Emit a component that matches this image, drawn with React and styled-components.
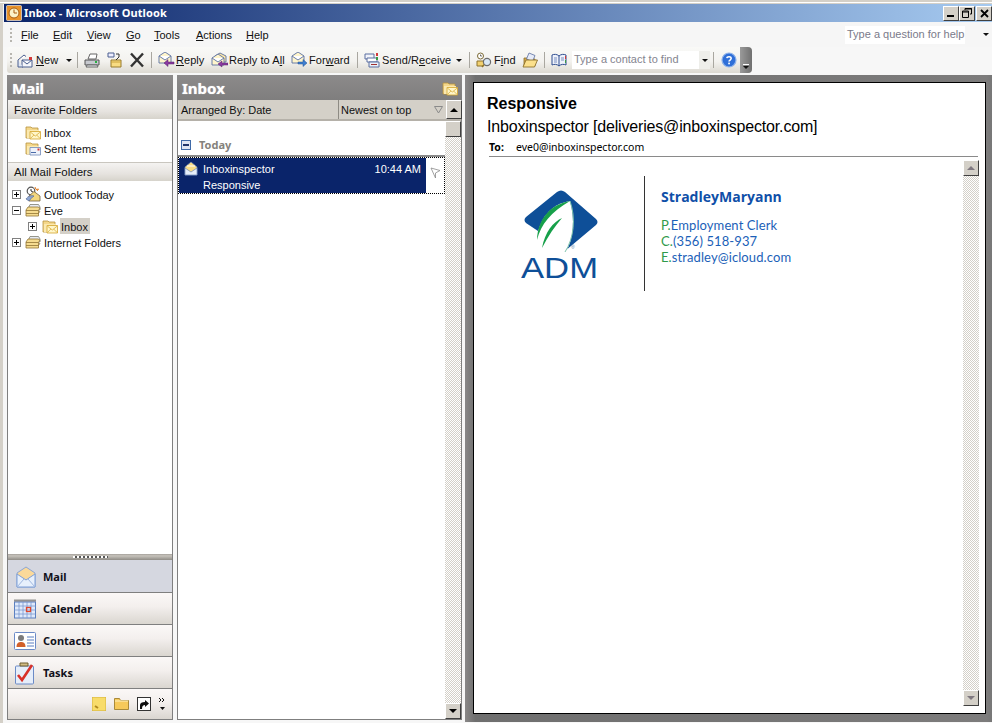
import React from "react";
import styled, { createGlobalStyle } from "styled-components";

const UI = `"Liberation Sans", Arial, sans-serif`;
const UIB = `"Noto Sans", "Liberation Sans", sans-serif`;

const Global = createGlobalStyle`
  html, body { margin: 0; padding: 0; background: #f7f7f7; overflow: hidden; }
  * { box-sizing: border-box; }
`;

const Win = styled.div`
  width: 992px; height: 719px; display: flex; flex-direction: column;
  font: 11px/14px ${UI}; color: #000; background: #f7f7f7; overflow: hidden;
  border-left: 3px solid #d4d0c8;
`;
const TopEdge = styled.div`
  height: 4px; background: linear-gradient(#d4d0c8 0 2px, #fff 2px 3px, #d4d0c8 3px);
`;
const TitleBar = styled.div`
  height: 18px; flex: none; display: flex; align-items: center; padding-left: 2px;
  margin-left: 1px; background: linear-gradient(90deg, #0a246a, #a6caf0);
`;
const TitleText = styled.div`
  color: #fff; font: 700 11px/14px ${UIB}; margin-left: 2px; flex: 1; white-space: nowrap; letter-spacing: 0.1px;
`;
const WinBtn = styled.div`
  width: 16px; height: 15px; margin-right: ${p => p.$mr || 0}px; background: #d4d0c8; flex: none;
  border: 1px solid; border-color: #fff #404040 #404040 #fff; display: flex; align-items: center; justify-content: center;
`;
const MenuBar = styled.div`
  height: 25px; flex: none; display: flex; align-items: center; background: #f6f6f6; position: relative;
  padding-top: 1px;
`;
const Grip = styled.div`
  width: 2px; height: ${p => p.$h || 14}px; flex: none; margin: 0 ${p => p.$r}px 0 ${p => p.$l}px;
  background: repeating-linear-gradient(#b8b6b0 0 2px, transparent 2px 4px);
`;
const MenuItem = styled.span`
  width: ${p => p.$w}px; flex: none; font-size: 11px; white-space: nowrap; color: #111;
  u { text-underline-offset: 1px; }
`;
const HelpBox = styled.div`
  margin-left: auto; width: 120px; height: 18px; margin-right: 27px; background: #fff; color: #7a7a8a;
  padding-left: 2px; font-size: 11px; line-height: 17px; white-space: nowrap; margin-top: -1px;
`;
const Arrow = styled.span`
  display: inline-block; width: 0; height: 0; flex: none;
  border-left: 3px solid transparent; border-right: 3px solid transparent; border-top: 3px solid #111;
`;
const AbsoluteArrow = styled(Arrow)`
  position: absolute; right: 3px; top: 11px;
`;
const ToolRow = styled.div`
  height: 28px; flex: none; display: flex; align-items: flex-start;
`;
const Toolbar = styled.div`
  margin-left: 4px; width: 745px; height: 26px; border-radius: 3px 4px 4px 3px; display: flex; align-items: center;
  background: linear-gradient(#f9f9f7, #f3f2ef 55%, #dcd9d1); position: relative; padding-right: 11px;
`;
const ToolEnd = styled.div`
  position: absolute; right: 0; top: 0; bottom: 0; width: 12px; background: linear-gradient(90deg,#9a9a9a,#707070);
  border-radius: 0 4px 4px 0; display: flex; flex-direction: column; align-items: center; justify-content: flex-end; padding-bottom: 4px;
  &::before { content: ""; width: 6px; height: 1px; background: #fff; margin-bottom: 1px; }
`;
const Tool = styled.div`
  width: ${p => p.$w}px; flex: none; display: flex; align-items: center; justify-content: ${p => p.$c ? "center" : "flex-start"};
  padding-left: ${p => p.$pl || 0}px; gap: ${p => p.$gap ?? 1}px; font-size: 11px; letter-spacing: 0.05px; white-space: nowrap; color: #111;
  u { text-underline-offset: 1px; }
`;
const Sep = styled.div`
  width: 1px; height: 16px; background: #a9a7a0; flex: none; margin: 0 ${p => p.$r ?? 3}px 0 ${p => p.$l ?? 2}px;
`;
const ContactBox = styled.div`
  width: 138px; height: 18px; flex: none; background: #fff; color: #84848f; font-size: 11px; line-height: 17px;
  padding-left: 2px; display: flex; justify-content: space-between; white-space: nowrap;
`;
const ContactDrop = styled.div`
  width: 11px; background: #eeeeea; display: flex; align-items: center; justify-content: center;
`;
const Main = styled.div`
  flex: 1; min-height: 0; display: flex; padding-left: 4px;
`;
const LeftPane = styled.div`
  width: 166px; height: 645px; flex: none; display: flex; flex-direction: column;
  border: 1px solid #7f7f7f; border-top: 0; background: #fff; margin-right: 4px;
`;
const PaneHead = styled.div`
  height: 25px; flex: none; margin: 0 -1px; background: linear-gradient(#8c8a8a, #7f7e7e); color: #fff; font: 700 15px/24px ${UIB};
  padding: 0 4px 0 5px; display: flex; justify-content: space-between; align-items: center;
  text-shadow: 0 0 1px #ddd;
`;
const SectionHead = styled.div`
  height: 19px; flex: none; background: linear-gradient(#f4f3f1, #e6e3df 60%, #d6d3cb); font-size: 11.5px; line-height: 18px; padding-left: 6px;
  padding-top: ${p => p.$top ? 0 : 1}px;
  color: #111; border-top: ${p => p.$top ? "1px solid #c9c6bf" : "0"}; white-space: nowrap;
`;
const FavList = styled.div`
  height: 43px; flex: none; padding-top: 5px;
`;
const Tree = styled.div`
  flex: 1; padding-top: 5px;
`;
const Row = styled.div`
  height: 16px; display: flex; align-items: center; padding-left: ${p => p.$pl}px; font-size: 11px; color: #111; white-space: nowrap;
`;
const RowLabel = styled.span`
  margin-left: 2px; padding: 0 2px 0 1px; height: 16px; line-height: 18px; background: ${p => p.$sel ? "#d4d0c8" : "transparent"};
`;
const PlusBox = styled.div`
  width: 9px; height: 9px; flex: none; border: 1px solid #808080; background: #fff; position: relative; margin-right: ${p => p.$mr}px;
  &::before { content: ""; position: absolute; left: 1px; right: 1px; top: 3px; height: 1px; background: #000; }
  &::after { content: ""; position: absolute; top: 1px; bottom: 1px; left: 3px; width: 1px; background: ${p => p.$minus ? "transparent" : "#000"}; }
`;
const Splitter = styled.div`
  height: 6px; flex: none; background: linear-gradient(#a4a09a, #c7c3bc 30%, #8f8c86); display: flex; justify-content: center; align-items: center;
  &::before { content: ""; width: 35px; height: 2px; background: repeating-linear-gradient(90deg, #fff 0 2px, #555 2px 4px); }
`;
const NavBtn = styled.div`
  height: 32px; flex: none; display: flex; align-items: center; padding-left: 6px; padding-top: ${p => p.$active ? 1 : 0}px;
  font: 700 11px/14px ${UIB}; color: #10101a; border-top: ${p => p.$active ? 0 : "1px solid #7f7f7f"};
  background: ${p => p.$active ? "#d5d7e0" : "linear-gradient(#fbf8f7, #f3efed 45%, #dad6d0)"};
`;
const NavSlot = styled.div`
  width: 29px; flex: none; padding-left: ${p => p.$pl || 0}px; display: flex; align-items: center;
`;
const NavFoot = styled.div`
  height: 31px; flex: none; display: flex; justify-content: flex-end; align-items: center; padding-right: 6px; gap: 8px; border-top: 1px solid #7f7f7f;
  background: linear-gradient(#fbf8f7, #f3efed 45%, #dad6d0);
`;
const MidPane = styled.div`
  width: 285px; height: 645px; flex: none; display: flex; flex-direction: column; margin-right: 3px;
  border: 1px solid #7f7f7f; border-top: 0; background: #fff;
`;
const SortBar = styled.div`
  height: 21px; flex: none; background: #d4d0c8; display: flex; border-bottom: 2px solid #b5b1a9;
  font-size: 11px; line-height: 20px; color: #111; white-space: nowrap;
`;
const SortCol = styled.div`
  width: ${p => p.$w}px; flex: none; padding-left: ${p => p.$pl}px; border-left: ${p => p.$line ? "1px solid #8e8b84" : 0}; position: relative; height: 19px;
`;
const SortFlag = styled.svg`
  position: absolute; right: 3px; top: 6px;
`;
const MidBody = styled.div`
  flex: 1; min-height: 0; display: flex;
`;
const MailList = styled.div`
  flex: 1; padding-top: 13px;
`;
const GroupRow = styled.div`
  height: 23px; display: flex; align-items: center; padding: 2px 0 2px 3px; font: 700 11px/14px ${UIB}; color: #85827c; gap: 8px;
  border-bottom: 2px solid #8a8a8a;
`;
const GroupBox = styled.div`
  width: 10px; height: 10px; border: 1px solid #3f6aa8; background: #dfe6f3; position: relative;
  &::before { content: ""; position: absolute; left: 1px; right: 1px; top: 3px; height: 2px; background: #20356a; }
`;
const MailRow = styled.div`
  height: 37px; display: flex; border: 1px dotted #000; background: #fff;
`;
const MailMain = styled.div`
  width: 247px; flex: none; background: #0a246a; color: #fff; display: grid; grid-template-columns: 20px 1fr auto; grid-template-rows: 17px 16px;
  font-size: 11px; line-height: 16px; padding: 2px 5px 0 4px; white-space: nowrap; align-items: center;
`;
const Subject = styled.div`
  grid-column: 2 / 4;
`;
const MailFlag = styled.div`
  flex: 1; display: flex; justify-content: center; padding: 9px 0 0 1px;
`;
const VScroll = styled.div`
  width: 16px; flex: none; display: flex; flex-direction: column;
  background: repeating-conic-gradient(#d4d0c8 0 25%, #fff 0 50%) 0 0 / 2px 2px;
`;
const ScrollBtn = styled.div`
  width: 16px; height: ${p => p.$h || 16}px; flex: none; background: #d4d0c8; border: 1px solid; border-color: #fff #404040 #404040 #fff; display: flex; align-items: center; justify-content: center;
`;
const ScrollSpace = styled.div`
  flex: 1;
`;
const UpTri = styled.span`
  width: 0; height: 0; border-left: 4px solid transparent; border-right: 4px solid transparent;
  border-bottom: 4px solid ${p => p.$dim ? "#7f7880" : "#000"};
`;
const DownTri = styled.span`
  width: 0; height: 0; border-left: 4px solid transparent; border-right: 4px solid transparent;
  border-top: 4px solid ${p => p.$dim ? "#7f7880" : "#000"};
`;
const ReadFrame = styled.div`
  flex: 1; height: 647px; padding: 7px 6px 8px 8px; display: flex;
  background: linear-gradient(90deg, #8a8888, #6f6f6f 2%, #7d7c7c 99%, #777);
`;
const ReadPage = styled.div`
  flex: 1; background: #fff; border: 1px solid #000; display: flex; flex-direction: column; padding-right: 6px; padding-bottom: 7px;
`;
const Head = styled.div`
  height: 73px; flex: none; padding: 11px 0 0 13px; margin-bottom: 4px;
`;
const Subj = styled.div`
  font: 700 16px/20px "Liberation Sans", Arial, sans-serif; color: #000;
`;
const From = styled.div`
  font: 16px/20px "Liberation Sans", Arial, sans-serif; color: #000; margin-top: 3px; letter-spacing: -0.17px;
`;
const ToRow = styled.div`
  display: flex; margin: 3px 1px 0 2px; height: 17px; font: 10.5px/14px ${UIB}; border-bottom: 1px solid #8a8a8a;
`;
const ToLabel = styled.b`
  width: 27px; flex: none;
`;
const Body = styled.div`
  flex: 1; min-height: 0; display: flex; justify-content: space-between;
`;
const Signature = styled.div`
  display: flex; align-items: flex-start; padding: 16px 0 0 47px;
`;
const Logo = styled.svg`
  margin-top: 14px; flex: none;
`;
const VRule = styled.div`
  width: 1px; height: 115px; background: #333; margin: 0 16px 0 45px; flex: none;
`;
const SigText = styled.div`
  padding-top: 12px;
`;
const SigName = styled.div`
  font: 700 14px/18px "Open Sans", sans-serif; color: #0f4fa8; margin-bottom: 11px; white-space: nowrap;
`;
const SigLine = styled.div`
  font: 13px/16px Lato, sans-serif; letter-spacing: 0.1px; white-space: nowrap; color: #1c5fb8;
  span { color: #2f9a4a; }
`;

const I = ({ s = 16, w, h, children, vb }) => (
  <svg width={w || s} height={h || s} viewBox={vb || "0 0 16 16"} style={{ flex: "none", display: "block" }}>{children}</svg>
);

const FolderBase = () => (
  <>
    <path d="M1 4V3h5l1 1h6v10H1z" fill="#f4d78a" stroke="#b8923c" strokeWidth=".8" />
    <path d="M2 6h12v8H2z" fill="#fbe9b0" />
  </>
);
const MailFolder = () => (
  <I>
    <FolderBase />
    <path d="M5 7.5h10.5v7.5H5z" fill="#fff6c9" stroke="#d3a52e" strokeWidth=".8" />
    <path d="M5.3 8l5 4 5-4M5.3 14.6l3.6-3.6M15.2 14.6l-3.6-3.6" fill="none" stroke="#d9ae3c" strokeWidth=".8" />
  </I>
);
const SentFolder = () => (
  <I>
    <FolderBase />
    <path d="M5 7.5h10.5v7.5H5z" fill="#eef2fa" stroke="#6f88b8" strokeWidth=".8" />
    <path d="M6 12.5h5" stroke="#4a6aa8" strokeWidth="1" />
    <rect x="12.5" y="8.5" width="2" height="2" fill="#d23a3a" />
  </I>
);
const TodayIcon = () => (
  <I>
    <circle cx="6" cy="5" r="3.8" fill="#fff" stroke="#555" strokeWidth="1.2" />
    <path d="M6 3v2l2 1" stroke="#333" fill="none" />
    <path d="M4 15v-5l5-4.5 6 4.5v5z" fill="#f3d77e" stroke="#75603a" strokeWidth=".8" />
    <path d="M10 1l1 2.5L13.5 3 12 5" stroke="#e2791c" fill="none" />
    <path d="M1 13c2-3 5-4 8-3-2 1-4 4-5 5z" fill="#8ea6d2" stroke="#4a5f8f" strokeWidth=".6" />
  </I>
);
const StackFolder = () => (
  <I>
    <path d="M3 7l2-4.500h8.500L15 5v3z" fill="#e6ebf4" stroke="#7d7d70" strokeWidth=".8" />
    <path d="M1 8l2-3h10l2 1-1.500 2.500V14H1z" fill="#f6dc90" stroke="#927535" strokeWidth=".8" />
    <path d="M1 8.500h12.500M1 11.500h12.500L15 9" fill="none" stroke="#927535" strokeWidth=".8" />
  </I>
);
const NewIcon = () => (
  <I>
    <path d="M1 8l6-5 2 1.5" fill="#fff" stroke="#4a5f8f" />
    <path d="M5 8h10v7H5z" fill="#f6f7fb" stroke="#4a5f8f" />
    <path d="M1 8v7h5" fill="#dfe6f3" stroke="#4a5f8f" />
    <path d="M5 8l5 4 5-4" fill="none" stroke="#4a5f8f" />
    <rect x="12" y="5" width="3" height="3" fill="#d23a3a" />
  </I>
);
const PrintIcon = () => (
  <I>
    <path d="M4 7l2-5h7l-1 5z" fill="#fff" stroke="#666" />
    <path d="M1 8h14v5H1z" fill="#c7c9cf" stroke="#555" />
    <path d="M3 13h10l1 2H2z" fill="#eceef2" stroke="#666" />
    <rect x="11" y="9" width="2" height="2" fill="#28b040" />
  </I>
);
const MoveIcon = () => (
  <I>
    <path d="M2 1h6v4H2z" fill="#eef" stroke="#4a5f8f" />
    <path d="M5 8h10v7H5z" fill="#f8dc82" stroke="#977a2c" />
    <path d="M10 2h3v3M13 5l-3 3" fill="none" stroke="#333" />
    <path d="M5 10h10" stroke="#c9a23d" />
  </I>
);
const DelIcon = () => (
  <I s={16}><path d="M2 1.5l12 13M14 1.5l-12 13" stroke="#333" strokeWidth="2.4" /></I>
);
const Env = ({ y = 3, fill = "#fff5cb", st = "#5a6fa0" }) => (
  <>
    <path d={`M1 ${y + 3}l6-4 6 4v7H1z`} fill={fill} stroke={st} strokeWidth=".9" />
    <path d={`M1 ${y + 3}l6 4 6-4`} fill="#fff" stroke={st} strokeWidth=".9" />
  </>
);
const ReplyIcon = () => (
  <I w={17} h={16} vb="0 0 17 16">
    <Env y={1} />
    <path d="M16 10H10V7.5L6 11l4 3.5V12h6z" fill="#8b3aa0" stroke="#57206a" strokeWidth=".5" />
  </I>
);
const ReplyAllIcon = () => (
  <I w={17} h={16} vb="0 0 17 16">
    <path d="M4 4l5-3 6 3v6H4z" fill="#fde7a8" stroke="#5a6fa0" strokeWidth=".9" />
    <Env y={3} />
    <path d="M17 11h-6V9l-4 3 4 3v-2h6z" fill="#8b3aa0" stroke="#57206a" strokeWidth=".5" />
  </I>
);
const ForwardIcon = () => (
  <I w={17} h={16} vb="0 0 17 16">
    <Env y={1} />
    <path d="M7 10h5V7.500l4 3.500-4 3.500V12H7z" fill="#3f7fd0" stroke="#1f4f90" strokeWidth=".5" />
  </I>
);
const SendIcon = () => (
  <I>
    <path d="M1 2h9v5H1z" fill="#f2f4fa" stroke="#5a6fa0" />
    <path d="M3 6h10v4H3z" fill="#fff" stroke="#5a6fa0" />
    <path d="M5 10h10v5H5z" fill="#eaf0fa" stroke="#5a6fa0" />
    <rect x="12" y="1" width="2" height="3" fill="#d23a3a" />
    <rect x="12" y="5" width="2" height="3" fill="#3b9a46" />
    <path d="M7 12.500h6" stroke="#a03030" />
  </I>
);
const FindIcon = () => (
  <I>
    <circle cx="4.500" cy="4" r="3" fill="#fff" stroke="#7b6a34" />
    <path d="M4.500 2.500V4h1.500" stroke="#333" fill="none" strokeWidth=".7" />
    <path d="M1 14V9h8v2l-2 3z" fill="#f2d170" stroke="#8d722c" />
    <circle cx="11" cy="10" r="3.600" fill="#d8e7f6" stroke="#6c6c6c" strokeWidth="1.200" />
    <path d="M8 13l-2 2" stroke="#8d722c" strokeWidth="1.600" />
  </I>
);
const OpenFolderIcon = () => (
  <I>
    <path d="M2 6h4l1 1h6v7H2z" fill="#d2a648" stroke="#8d722c" strokeWidth=".8" />
    <path d="M7 1l6 2.500-2.500 6-6-2.500z" fill="#e6ebf8" stroke="#5a6fa0" strokeWidth=".8" />
    <path d="M1 15l3-7h11.500l-3 7z" fill="#fbe08c" stroke="#8d722c" strokeWidth=".9" />
  </I>
);
const BookIcon = () => (
  <I>
    <path d="M1 3c2-1 5-1 7 1 2-2 5-2 7-1v10c-2-1-5-1-7 1-2-2-5-2-7-1z" fill="#eef2fb" stroke="#2f4d8f" />
    <path d="M8 4v10" stroke="#2f4d8f" />
    <path d="M3 6h3M3 8h3M3 10h3M10 6h3M10 8h3" stroke="#7b8fc0" />
    <path d="M14.500 4v3" stroke="#d23a3a" strokeWidth="1" /><path d="M14.500 8v3" stroke="#3b9a46" strokeWidth="1" />
  </I>
);
const HelpIcon = () => (
  <I>
    <circle cx="8" cy="8" r="7" fill="#2f6fd8" stroke="#8fb3ea" strokeWidth="1.200" />
    <path d="M5.800 6.200C6 4.400 10 4.200 10.200 6.200 10.400 8 8 8 8 9.600" fill="none" stroke="#fff" strokeWidth="1.600" />
    <rect x="7.200" y="10.600" width="1.700" height="1.700" fill="#fff" />
  </I>
);
const ClockLogo = () => (
  <I>
    <rect x=".5" y=".5" width="15" height="15" rx="1" fill="#e9932a" stroke="#fff" strokeWidth=".6" />
    <circle cx="8" cy="8" r="5" fill="#fbf2c8" stroke="#a85d10" />
    <path d="M8 4.500V8h3" fill="none" stroke="#a85d10" />
  </I>
);
const MailOpenSmall = () => (
  <I>
    <path d="M2 6l6-5 6 5v8H2z" fill="#f9dc85" stroke="#6f88b8" strokeWidth=".7" />
    <path d="M2 7l6 4 6-4v7H2z" fill="#e6eefa" stroke="#6f88b8" strokeWidth=".7" />
    <path d="M4 5h8" stroke="#fff" />
  </I>
);
const NavMail = () => (
  <I w={20} h={22} vb="0 0 20 22">
    <path d="M1 7l9-6 9 6v14H1z" fill="#fbd99a" stroke="#8aa6d6" />
    <path d="M1 8l9 6 9-6v13H1z" fill="#e7f0fc" stroke="#7f9fd6" />
    <path d="M1 21l7-8M19 21l-7-8" stroke="#9fb7e0" fill="none" />
  </I>
);
const NavCal = () => (
  <I w={22} h={20} vb="0 0 22 20">
    <rect x=".5" y="3" width="21" height="16" fill="#dfe9fa" stroke="#5a7fc0" />
    <path d="M.5 1.500h21" stroke="#333" strokeDasharray="1 1" strokeWidth="2" />
    <path d="M.5 7h21M.5 11h21M.5 15h21M5 3v16M9 3v16M13 3v16M17 3v16" stroke="#7b9ad0" strokeWidth=".8" />
    <rect x="12.500" y="8.500" width="4" height="4" fill="none" stroke="#e0452a" strokeWidth="1.300" />
  </I>
);
const NavContact = () => (
  <I w={22} h={18} vb="0 0 22 18">
    <rect x=".5" y=".5" width="21" height="17" rx="1" fill="#fff" stroke="#6b8ac6" />
    <circle cx="7" cy="6" r="3" fill="#7b7b7b" />
    <path d="M2.500 15c0-4 2-5 4.500-5s4.500 1 4.500 5z" fill="#d2602a" />
    <path d="M13 5h7M13 8h7M13 11h7M13 14h7" stroke="#5a7fc0" />
  </I>
);
const NavTask = () => (
  <I w={19} h={24} vb="0 0 19 24">
    <rect x=".5" y="5" width="18" height="18" rx="1" fill="#e6eefa" stroke="#6b8ac6" />
    <path d="M5 5V2h8v3z" fill="#d2bc82" stroke="#6f5f30" />
    <path d="M3 14l4 5L17 4" fill="none" stroke="#d8312a" strokeWidth="2.600" />
  </I>
);
const NoteIcon = () => (
  <I w={14} h={14} vb="0 0 14 14"><rect width="14" height="14" fill="#f8dc6a" stroke="#d3b23d" /><path d="M3 9l3 2" stroke="#b08a20" strokeWidth="2" /></I>
);
const FolderFoot = () => (
  <I w={15} h={12} vb="0 0 15 12"><path d="M.5 2V.5h5l1 2h8V11.500H.5z" fill="#f6c95a" stroke="#a98a3a" /><path d="M1 3h13" stroke="#fff2c0" /></I>
);
const ShortcutIcon = () => (
  <I w={14} h={14} vb="0 0 14 14"><rect x=".5" y=".5" width="13" height="13" fill="#fff" stroke="#333" /><path d="M3 12V8c0-2 2-3 5-3V3l4 3.500L8 10V8C6 8 5 9 5 12z" fill="#111" /></I>
);
const FootChevrons = () => (
  <I w={7} h={14} vb="0 0 7 14">
    <path d="M0 1l2 2-2 2M3 1l2 2-2 2" fill="none" stroke="#111" /><path d="M1 10h5l-2.500 3z" fill="#111" />
  </I>
);
const FlagOutline = ({ c = "#8a8a8a" }) => (
  <I w={11} h={12} vb="0 0 11 12"><path d="M1 1l9 2.500L5.500 6v5z" fill="none" stroke={c} strokeWidth=".8" /></I>
);
const MinGlyph = () => <I w={8} h={8} vb="0 0 8 8"><rect x="0" y="6" width="7" height="2" fill="#000" /></I>;
const RestoreGlyph = () => <I w={10} h={10} vb="0 0 10 10"><path d="M3 2V.5h6.500V6H8M.5 3h6v6.500h-6z" fill="none" stroke="#000" /><path d="M3 1h7M1 4h6" stroke="#000" /></I>;
const CloseGlyph = () => <I w={9} h={9} vb="0 0 9 9"><path d="M1 1l7 7M8 1L1 8" stroke="#000" strokeWidth="1.800" /></I>;

const AdmLogo = () => (
  <Logo width="78" height="96" viewBox="0 0 78 96">
    <path d="M36 2Q40-1 44 2L75 29Q78 32 75 35L44 61 20 43 5 33Q2 30 5 27Z" fill="#0e4f98" />
    <path d="M49 11C30 14 18 28 15 52L44 63C53 50 54 28 49 11Z" fill="#fff" />
    <path d="M49 11C32 14 17 26 16 50 20 34 30 22 49 11Z" fill="#17a04a" />
    <path d="M41 28C32 32 24 42 21 58 27 46 34 36 41 28Z" fill="#17a04a" />
    <path d="M49 11C55 28 53 48 44 62" fill="none" stroke="#7fc4ac" strokeWidth="1" />
    <text x="50" y="59" fontFamily="Liberation Sans, Arial, sans-serif" fontSize="5" fill="#5a7fa8">®</text>
    <text x="0" y="88" fontFamily="Liberation Sans, Arial, sans-serif" fontSize="29" textLength="77" lengthAdjust="spacingAndGlyphs" fill="#0e4f98">ADM</text>
  </Logo>
);

export default function App() {
  return (
    <>
      <Global />
      <TopEdge />
      <Win>
        <TitleBar>
          <ClockLogo />
          <TitleText>Inbox - Microsoft Outlook</TitleText>
          <WinBtn><MinGlyph /></WinBtn>
          <WinBtn $mr={1}><RestoreGlyph /></WinBtn>
          <WinBtn><CloseGlyph /></WinBtn>
        </TitleBar>
        <MenuBar>
          <Grip $l={7} $r={9} />
          <MenuItem $w={32}><u>F</u>ile</MenuItem>
          <MenuItem $w={34}><u>E</u>dit</MenuItem>
          <MenuItem $w={39}><u>V</u>iew</MenuItem>
          <MenuItem $w={28}><u>G</u>o</MenuItem>
          <MenuItem $w={42}><u>T</u>ools</MenuItem>
          <MenuItem $w={50}><u>A</u>ctions</MenuItem>
          <MenuItem $w={40}><u>H</u>elp</MenuItem>
          <HelpBox>Type a question for help</HelpBox>
          <AbsoluteArrow />
        </MenuBar>
        <ToolRow>
          <Toolbar>
            <Grip $l={3} $r={3} />
            <Tool $w={47} $pl={2} $gap={3}><NewIcon /><span><u>N</u>ew</span></Tool>
            <Tool $w={13} $c><Arrow /></Tool>
            <Sep $l={2} $r={3} />
            <Tool $w={22} $c><PrintIcon /></Tool>
            <Tool $w={22} $c><MoveIcon /></Tool>
            <Tool $w={24} $c><DelIcon /></Tool>
            <Sep $l={2} $r={2} />
            <Tool $w={53} $pl={4}><ReplyIcon /><span><u>R</u>eply</span></Tool>
            <Tool $w={81} $pl={4}><ReplyAllIcon /><span>Reply to A<u>l</u>l</span></Tool>
            <Tool $w={67} $pl={3}><ForwardIcon /><span>For<u>w</u>ard</span></Tool>
            <Sep $l={2} $r={3} />
            <Tool $w={91} $pl={3} $gap={2}><SendIcon /><span>Send/R<u>e</u>ceive</span></Tool>
            <Tool $w={14} $c><Arrow /></Tool>
            <Sep $l={3} $r={4} />
            <Tool $w={44} $pl={2} $gap={2}><FindIcon /><span>F<u>i</u>nd</span></Tool>
            <Tool $w={23} $c><OpenFolderIcon /></Tool>
            <Sep $l={3} $r={4} />
            <Tool $w={23} $pl={2}><BookIcon /></Tool>
            <ContactBox>Type a contact to find<ContactDrop><Arrow /></ContactDrop></ContactBox>
            <Sep $l={3} $r={4} />
            <Tool $w={20} $pl={3}><HelpIcon /></Tool>
            <ToolEnd><Arrow /></ToolEnd>
          </Toolbar>
        </ToolRow>
        <Main>
          <LeftPane>
            <PaneHead>Mail</PaneHead>
            <SectionHead>Favorite Folders</SectionHead>
            <FavList>
              <Row $pl={17}><MailFolder /><RowLabel>Inbox</RowLabel></Row>
              <Row $pl={17}><SentFolder /><RowLabel>Sent Items</RowLabel></Row>
            </FavList>
            <SectionHead $top>All Mail Folders</SectionHead>
            <Tree>
              <Row $pl={4}><PlusBox $mr={4} /><TodayIcon /><RowLabel>Outlook Today</RowLabel></Row>
              <Row $pl={4}><PlusBox $mr={4} $minus /><StackFolder /><RowLabel>Eve</RowLabel></Row>
              <Row $pl={20}><PlusBox $mr={5} /><MailFolder /><RowLabel $sel>Inbox</RowLabel></Row>
              <Row $pl={4}><PlusBox $mr={4} /><StackFolder /><RowLabel>Internet Folders</RowLabel></Row>
            </Tree>
            <Splitter />
            <NavBtn $active><NavSlot $pl={2}><NavMail /></NavSlot>Mail</NavBtn>
            <NavBtn><NavSlot><NavCal /></NavSlot>Calendar</NavBtn>
            <NavBtn><NavSlot><NavContact /></NavSlot>Contacts</NavBtn>
            <NavBtn><NavSlot $pl={1}><NavTask /></NavSlot>Tasks</NavBtn>
            <NavFoot><NoteIcon /><FolderFoot /><ShortcutIcon /><FootChevrons /></NavFoot>
          </LeftPane>
          <MidPane>
            <PaneHead>Inbox<MailFolder /></PaneHead>
            <SortBar>
              <SortCol $w={160} $pl={3}>Arranged By: Date</SortCol>
              <SortCol $w={108} $pl={2} $line>Newest on top<SortFlag width="9" height="8" viewBox="0 0 9 8"><path d="M.5.5h8L4.500 7z" fill="none" stroke="#8a8a8a" /></SortFlag></SortCol>
              <ScrollBtn $h={19}><UpTri /></ScrollBtn>
            </SortBar>
            <MidBody>
              <MailList>
                <GroupRow><GroupBox />Today</GroupRow>
                <MailRow>
                  <MailMain>
                    <MailOpenSmall />
                    <span>Inboxinspector</span>
                    <span>10:44 AM</span>
                    <span />
                    <Subject>Responsive</Subject>
                  </MailMain>
                  <MailFlag><FlagOutline /></MailFlag>
                </MailRow>
              </MailList>
              <VScroll>
                <ScrollBtn />
                <ScrollSpace />
                <ScrollBtn><DownTri /></ScrollBtn>
              </VScroll>
            </MidBody>
          </MidPane>
          <ReadFrame>
            <ReadPage>
              <Head>
                <Subj>Responsive</Subj>
                <From>Inboxinspector [deliveries@inboxinspector.com]</From>
                <ToRow><ToLabel>To:</ToLabel><span>eve0@inboxinspector.com</span></ToRow>
              </Head>
              <Body>
                <Signature>
                  <AdmLogo />
                  <VRule />
                  <SigText>
                    <SigName>StradleyMaryann</SigName>
                    <SigLine><span>P.</span>Employment Clerk</SigLine>
                    <SigLine><span>C.</span>(356) 518-937</SigLine>
                    <SigLine><span>E.</span>stradley@icloud.com</SigLine>
                  </SigText>
                </Signature>
                <VScroll>
                  <ScrollBtn><UpTri $dim /></ScrollBtn>
                  <ScrollSpace />
                  <ScrollBtn><DownTri $dim /></ScrollBtn>
                </VScroll>
              </Body>
            </ReadPage>
          </ReadFrame>
        </Main>
      </Win>
    </>
  );
}
